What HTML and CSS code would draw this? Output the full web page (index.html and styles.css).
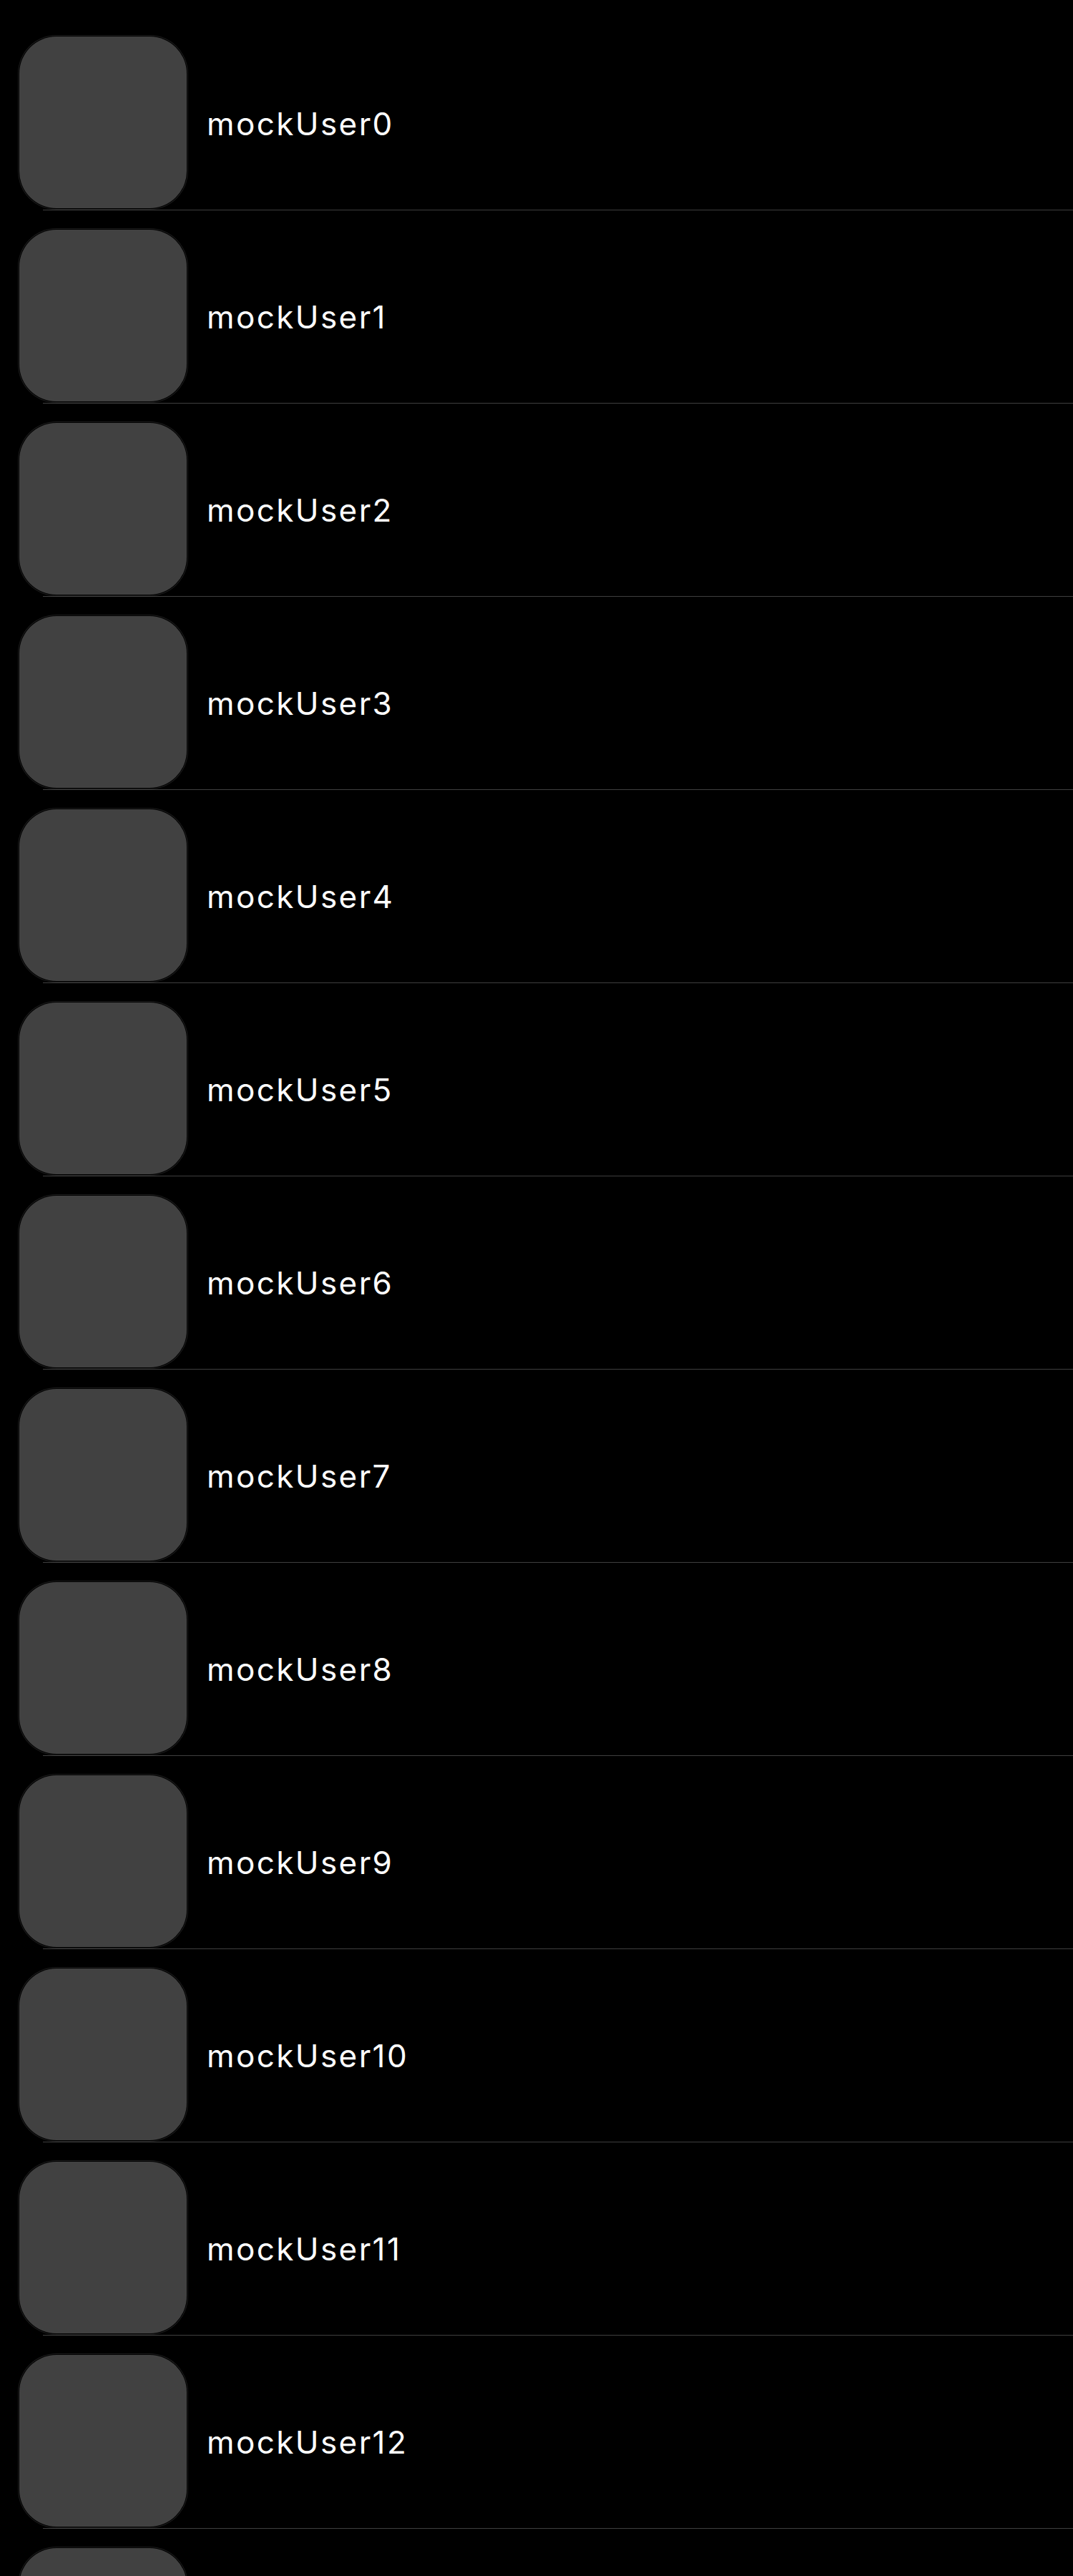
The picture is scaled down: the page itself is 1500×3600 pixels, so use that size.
FILE: index.html
```html
<!DOCTYPE html>
<html>
<head>
<meta charset="utf-8">
<link rel="stylesheet" href="styles.css">
</head>
<body>
<div class="list">
  <div class="row"><div class="avatar"></div><div class="name">mockUser0</div></div>
  <div class="row"><div class="avatar"></div><div class="name">mockUser1</div></div>
  <div class="row"><div class="avatar"></div><div class="name">mockUser2</div></div>
  <div class="row"><div class="avatar"></div><div class="name">mockUser3</div></div>
  <div class="row"><div class="avatar"></div><div class="name">mockUser4</div></div>
  <div class="row"><div class="avatar"></div><div class="name">mockUser5</div></div>
  <div class="row"><div class="avatar"></div><div class="name">mockUser6</div></div>
  <div class="row"><div class="avatar"></div><div class="name">mockUser7</div></div>
  <div class="row"><div class="avatar"></div><div class="name">mockUser8</div></div>
  <div class="row"><div class="avatar"></div><div class="name">mockUser9</div></div>
  <div class="row"><div class="avatar"></div><div class="name">mockUser10</div></div>
  <div class="row"><div class="avatar"></div><div class="name">mockUser11</div></div>
  <div class="row"><div class="avatar"></div><div class="name">mockUser12</div></div>
  <div class="row"><div class="avatar"></div></div>
</div>
</body>
</html>
```
FILE: styles.css
```css
html, body {
  margin: 0;
  padding: 0;
  background: #000;
}
body {
  height: 3600px;
  overflow: hidden;
  font-family: Inter, "Liberation Sans", sans-serif;
}
.list {
  padding-top: 24px;
}
.row {
  display: flex;
  align-items: center;
  height: 270px;
  box-sizing: border-box;
  padding: 27px 0 3px 27px;
  position: relative;
}
.row::after {
  content: "";
  position: absolute;
  left: 60px;
  right: 0;
  bottom: 0;
  height: 1px;
  background: #3f3f3f;
}
.avatar {
  width: 234px;
  height: 240px;
  flex: 0 0 auto;
  background: #414141;
  border-radius: 52px;
  box-shadow: 0 0 0 1px #000, 0 0 0 2px #1c1c1c;
}
.name {
  margin-left: 28px;
  color: #fff;
  font-size: 44px;
  font-weight: 400;
  letter-spacing: 2.4px;
  line-height: 1;
  padding-top: 4px;
}
```
